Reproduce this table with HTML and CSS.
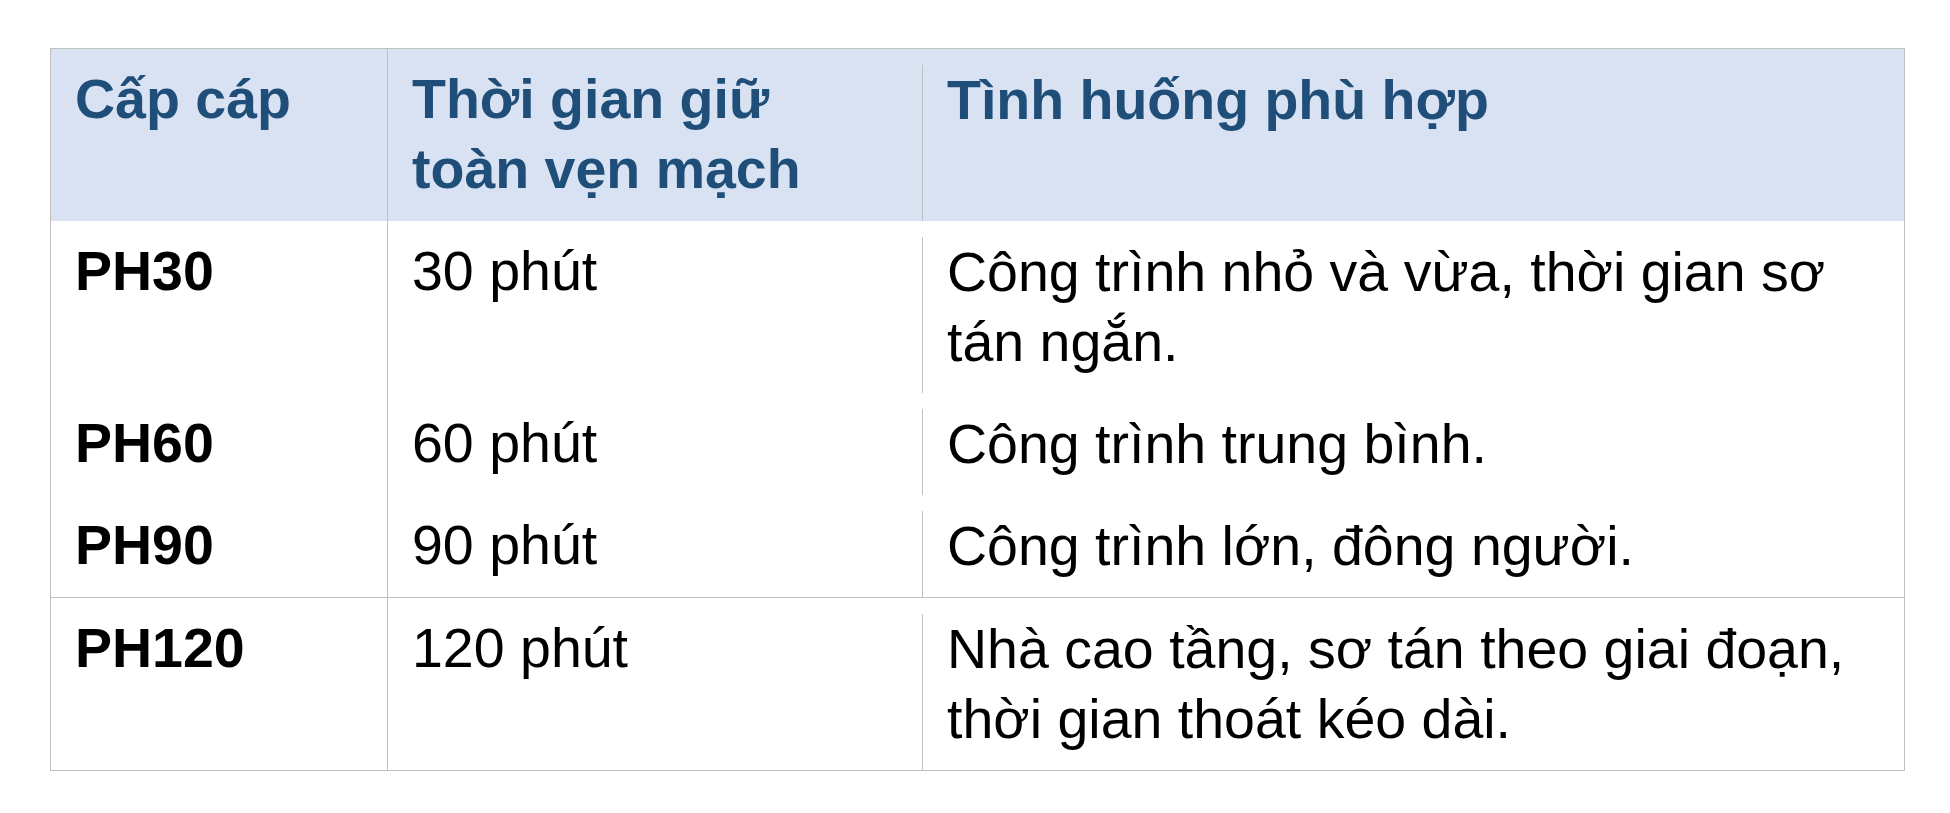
FILE: index.html
```html
<!DOCTYPE html>
<html lang="vi">
<head>
<meta charset="utf-8">
<title>Cấp cáp</title>
<link rel="stylesheet" href="styles.css">
</head>
<body>
<div class="page">
  <div class="table">
    <div class="row head">
      <div class="cell c1">Cấp cáp</div>
      <div class="cell c2">Thời gian giữ toàn vẹn mạch</div>
      <div class="cell c3">Tình huống phù hợp</div>
    </div>
    <div class="row">
      <div class="cell c1 code">PH30</div>
      <div class="cell c2">30 phút</div>
      <div class="cell c3">Công trình nhỏ và vừa, thời gian sơ tán ngắn.</div>
    </div>
    <div class="row">
      <div class="cell c1 code">PH60</div>
      <div class="cell c2">60 phút</div>
      <div class="cell c3">Công trình trung bình.</div>
    </div>
    <div class="row">
      <div class="cell c1 code">PH90</div>
      <div class="cell c2">90 phút</div>
      <div class="cell c3">Công trình lớn, đông người.</div>
    </div>
    <div class="row ruled">
      <div class="cell c1 code">PH120</div>
      <div class="cell c2">120 phút</div>
      <div class="cell c3">Nhà cao tầng, sơ tán theo giai đoạn, thời gian thoát kéo dài.</div>
    </div>
  </div>
</div>
</body>
</html>
```
FILE: styles.css
```css
html, body {
  margin: 0;
  padding: 0;
  background: #ffffff;
}

.page {
  padding: 48px 0 0 50px;
  font-family: "Liberation Sans", Arial, sans-serif;
  font-size: 55.5px;
  line-height: 70px;
  color: #000000;
}

.table {
  width: 1855px;
  box-sizing: border-box;
  border: 1px solid #c0c0c0;
}

.row {
  display: grid;
  grid-template-columns: 336px 535px 1fr;
}

.row.head {
  background: #d9e2f3;
  color: #1f4e79;
  font-weight: bold;
}

.row.ruled {
  border-top: 1px solid #c0c0c0;
}

.cell {
  padding: 15px 24px 17px 24px;
}

.c2 {
  border-left: 1px solid #c0c0c0;
  padding-right: 60px;
}

.c3 {
  border-left: 1px solid #c0c0c0;
  margin-top: 16px;
  padding-top: 0;
  padding-bottom: 16px;
  padding-right: 40px;
}

.code {
  font-weight: bold;
}
```
